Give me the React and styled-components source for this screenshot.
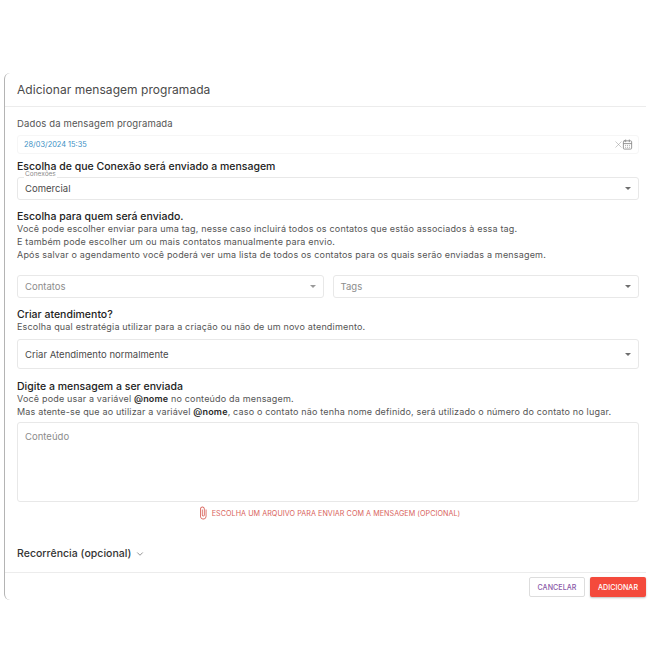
import React from "react";
import styled, { createGlobalStyle } from "styled-components";
import { X, CalendarDays, ChevronDown } from "lucide-react";

const GlobalStyle = createGlobalStyle`
    body {
        margin: 0;
        background: #fff;
        font-family: Inter, "Open Sans", sans-serif;
    }
`;

const Page = styled.div`
    width: 650px;
    height: 650px;
    box-sizing: border-box;
    padding: 73px 4px 0;
`;

const Dialog = styled.div`
    height: 527px;
    box-sizing: border-box;
    border-left: 1px solid #b4b4b4;
    border-radius: 6px 0 0 6px;
    background: #fff;
    display: flex;
    flex-direction: column;
`;

const Header = styled.div`
    height: 34px;
    box-sizing: border-box;
    padding: 9px 12px 0;
    border-bottom: 1px solid #ececec;
    font-size: 12px;
    line-height: 16px;
    letter-spacing: 0.05px;
    color: #4a4a4a;
`;

const Body = styled.div`
    flex: 1;
    padding: 0 7px 0 12px;
    border-bottom: 1px solid #ececec;
`;

const SmallLabel = styled.div`
    margin-top: 11px;
    font-size: 9.5px;
    line-height: 12px;
    letter-spacing: 0.14px;
    color: #555;
`;

const DateField = styled.div`
    height: 19px;
    margin-top: 5px;
    box-sizing: border-box;
    padding: 0 5px 0 6px;
    display: flex;
    align-items: center;
    justify-content: space-between;
    border: 1px solid #f6f6f6;
    border-radius: 3px;
    font-size: 7.4px;
    color: #3b8fc4;
`;

const DateIcons = styled.div`
    display: flex;
    align-items: center;
    color: #8f8f8f;

    svg + svg {
        margin-left: -2px;
    }
`;

const Heading = styled.h3`
    margin: ${(p) => p.$top}px 0 -1px;
    font-size: 10.5px;
    line-height: 13px;
    font-weight: 500;
    letter-spacing: 0.01px;
    color: #222;
`;

const Help = styled.p`
    margin: 0;
    font-size: 9px;
    line-height: 13px;
    letter-spacing: 0.175px;
    color: #555;

    strong {
        font-weight: 600;
        color: #2a2a2a;
    }
`;

const SelectBox = styled.div`
    position: relative;
    flex: 1;
    height: ${(p) => p.$height}px;
    margin-top: ${(p) => p.$top || 0}px;
    box-sizing: border-box;
    padding: 0 7px;
    display: flex;
    align-items: center;
    justify-content: space-between;
    border: 1px solid #e8e8e8;
    border-radius: 3px;
    background: #fff;
    font-size: 9.5px;
    letter-spacing: 0.02px;
    color: ${(p) => (p.$muted ? "#8c8c8c" : "#4a4a4a")};
`;

const FloatLabel = styled.span`
    position: absolute;
    left: 6px;
    top: -8px;
    padding: 0 1px;
    background: #fff;
    font-size: 6.5px;
    line-height: 8px;
    color: #8a8a8a;
`;

const Caret = styled.span`
    width: 0;
    height: 0;
    border-left: 3.5px solid transparent;
    border-right: 3.5px solid transparent;
    border-top: 3.5px solid ${(p) => (p.$light ? "#9a9a9a" : "#6e6e6e")};
`;

const SelectRow = styled.div`
    display: flex;
    gap: 9px;
    margin-top: 14px;
`;

const ContentBox = styled.div`
    height: 80px;
    margin-top: 4px;
    box-sizing: border-box;
    padding: 8px 7px;
    border: 1px solid #e8e8e8;
    border-radius: 3px;
    font-size: 9.5px;
    line-height: 12px;
    letter-spacing: 0.02px;
    color: #8c8c8c;
`;

const AttachRow = styled.div`
    height: 12px;
    margin-top: 5px;
    display: flex;
    align-items: center;
    justify-content: center;
    gap: 2px;
    font-size: 7.2px;
    letter-spacing: 0.05px;
    color: #d9645c;
`;

const RecurrenceRow = styled.div`
    margin-top: 28px;
    display: flex;
    align-items: center;
    gap: 4px;
    font-size: 10.5px;
    line-height: 13px;
    font-weight: 500;
    letter-spacing: 0.03px;
    color: #333;

    svg {
        color: #555;
    }
`;

const Footer = styled.div`
    height: 27px;
    box-sizing: border-box;
    padding-top: 4px;
    display: flex;
    justify-content: flex-end;
    gap: 5px;
`;

const Button = styled.button`
    width: 56px;
    height: 20px;
    padding: 0;
    box-sizing: border-box;
    border: ${(p) => (p.$primary ? "none" : "1px solid #ddd")};
    border-radius: 2px;
    background: ${(p) => (p.$primary ? "#f44a3c" : "#fff")};
    box-shadow: ${(p) => (p.$primary ? "0 1px 2px rgba(0,0,0,.25)" : "none")};
    font-family: inherit;
    font-size: 7.1px;
    font-weight: 500;
    letter-spacing: 0.05px;
    color: ${(p) => (p.$primary ? "#fff" : "#8a5aa8")};
`;

function ClipIcon() {
    return (
        <svg width="14" height="14" viewBox="0 0 24 24" fill="currentColor">
            <path d="M16.5 6v11.5c0 2.21-1.79 4-4 4s-4-1.79-4-4V5c0-1.38 1.12-2.5 2.5-2.5s2.5 1.12 2.5 2.5v10.5c0 .55-.45 1-1 1s-1-.45-1-1V6H10v9.5c0 1.38 1.12 2.5 2.5 2.5s2.5-1.12 2.5-2.5V5c0-2.21-1.79-4-4-4S7 2.79 7 5v12.5c0 3.04 2.46 5.5 5.5 5.5s5.5-2.46 5.5-5.5V6h-1.5z" />
        </svg>
    );
}

export default function App() {
    return (
        <Page>
            <GlobalStyle />
            <Dialog>
                <Header>Adicionar mensagem programada</Header>
                <Body>
                    <SmallLabel>Dados da mensagem programada</SmallLabel>
                    <DateField>
                        28/03/2024 15:35
                        <DateIcons>
                            <X size={11} strokeWidth={1} />
                            <CalendarDays size={11} strokeWidth={2} />
                        </DateIcons>
                    </DateField>
                    <Heading $top={6}>Escolha de que Conexão será enviado a mensagem</Heading>
                    <SelectBox $height={23} $top={5}>
                        <FloatLabel>Conexões</FloatLabel>
                        Comercial
                        <Caret />
                    </SelectBox>
                    <Heading $top={10}>Escolha para quem será enviado.</Heading>
                    <Help>Você pode escolher enviar para uma tag, nesse caso incluirá todos os contatos que estão associados à essa tag.</Help>
                    <Help>E também pode escolher um ou mais contatos manualmente para envio.</Help>
                    <Help>Após salvar o agendamento você poderá ver uma lista de todos os contatos para os quais serão enviadas a mensagem.</Help>
                    <SelectRow>
                        <SelectBox $height={23} $muted>
                            Contatos
                            <Caret $light />
                        </SelectBox>
                        <SelectBox $height={23} $muted>
                            Tags
                            <Caret />
                        </SelectBox>
                    </SelectRow>
                    <Heading $top={10}>Criar atendimento?</Heading>
                    <Help>Escolha qual estratégia utilizar para a criação ou não de um novo atendimento.</Help>
                    <SelectBox $height={30} $top={6}>
                        Criar Atendimento normalmente
                        <Caret />
                    </SelectBox>
                    <Heading $top={11}>Digite a mensagem a ser enviada</Heading>
                    <Help>Você pode usar a variável <strong>@nome</strong> no conteúdo da mensagem.</Help>
                    <Help>Mas atente-se que ao utilizar a variável <strong>@nome</strong>, caso o contato não tenha nome definido, será utilizado o número do contato no lugar.</Help>
                    <ContentBox>Conteúdo</ContentBox>
                    <AttachRow>
                        <ClipIcon />
                        ESCOLHA UM ARQUIVO PARA ENVIAR COM A MENSAGEM (OPCIONAL)
                    </AttachRow>
                    <RecurrenceRow>
                        Recorrência (opcional)
                        <ChevronDown size={10} strokeWidth={1.5} />
                    </RecurrenceRow>
                </Body>
                <Footer>
                    <Button>CANCELAR</Button>
                    <Button $primary>ADICIONAR</Button>
                </Footer>
            </Dialog>
        </Page>
    );
}
